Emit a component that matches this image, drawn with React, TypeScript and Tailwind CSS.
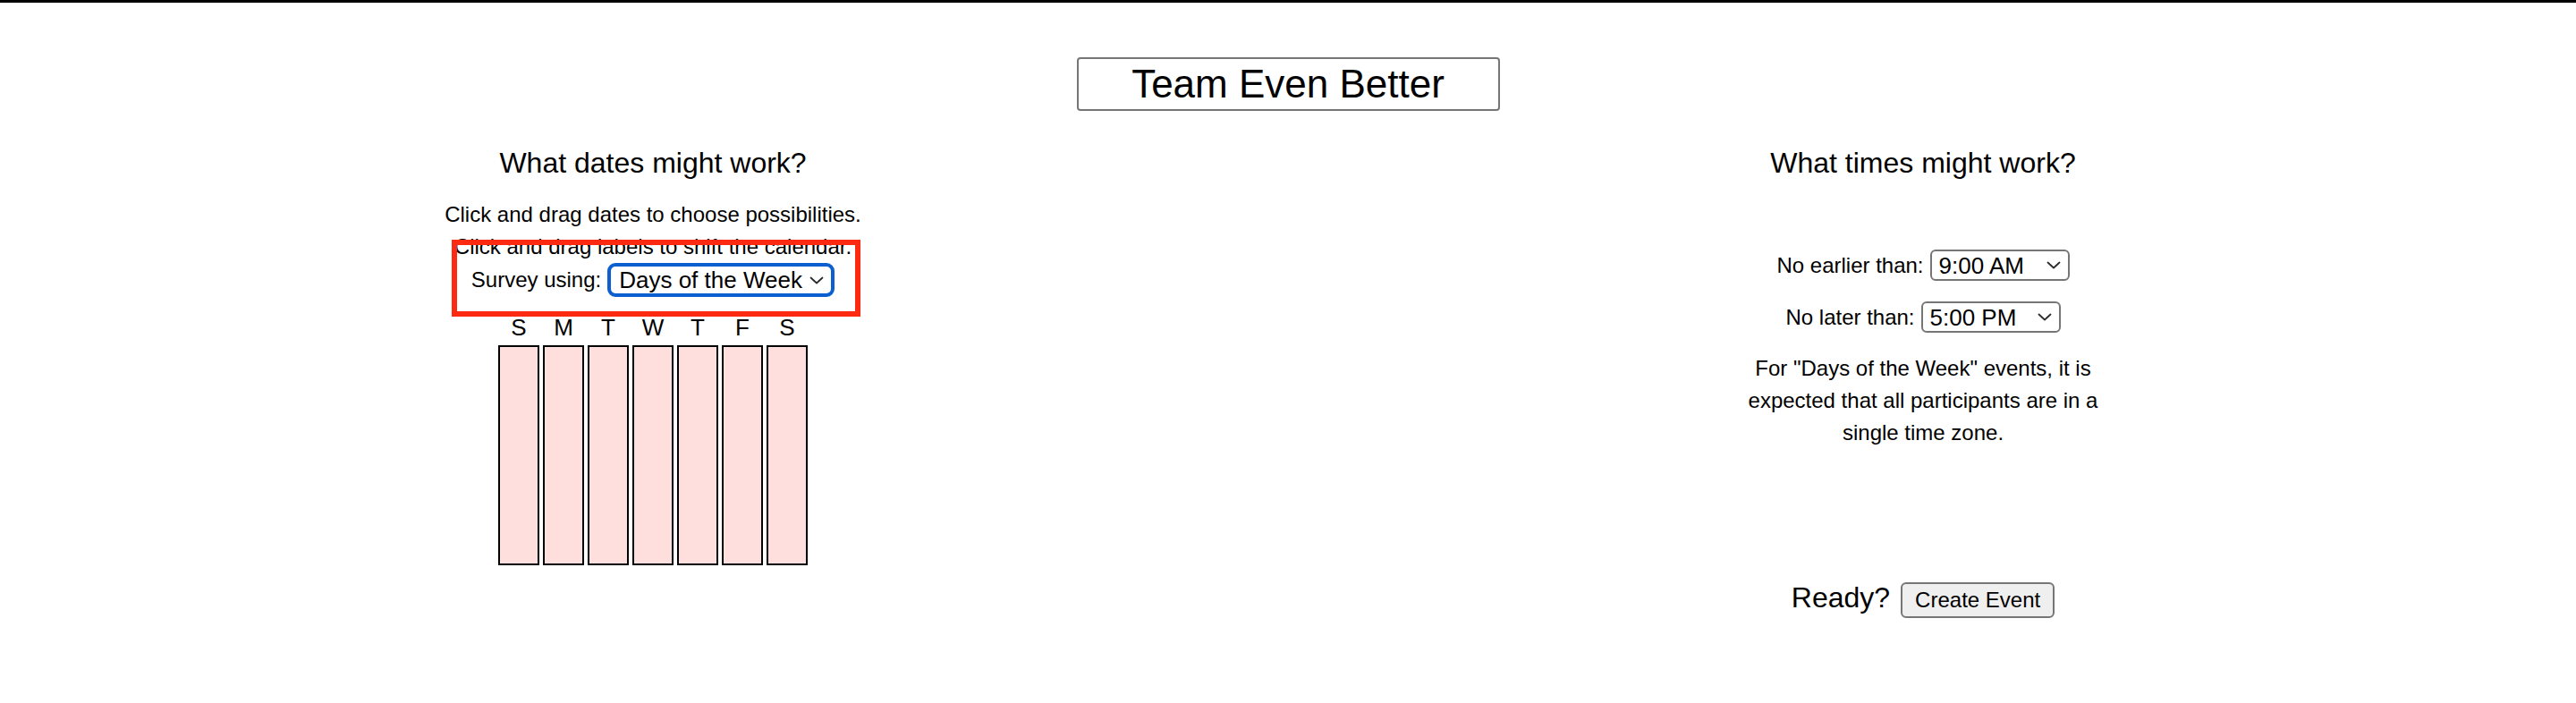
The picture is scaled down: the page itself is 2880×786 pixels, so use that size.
import { useState } from "react";

const days = ["S", "M", "T", "W", "T", "F", "S"];

function Chevron() {
	return (
		<svg width="16" height="9" viewBox="0 0 16 9" className="shrink-0">
			<path d="M1.5 1.5 L8 7.5 L14.5 1.5" fill="none" stroke="#2b2b2b" strokeWidth="1.8" strokeLinecap="round" strokeLinejoin="round" />
		</svg>
	);
}

// looks like a native mac select, but it's just a button
function FakeSelect({ value, className }: { value: string; className: string }) {
	return (
		<button
			type="button"
			className={
				"flex items-center justify-between bg-white text-left text-[26px] leading-none text-black outline-none " +
				className
			}
		>
			<span className="whitespace-nowrap">{value}</span>
			<Chevron />
		</button>
	);
}

export default function App() {
	const [title, setTitle] = useState("Team Even Better");

	return (
		<div className="relative min-h-[786px] bg-white font-['Liberation_Sans',Arial,sans-serif] text-black">
			<div className="h-[3px] w-full bg-black" />

			<div className="mt-[61px] flex justify-center">
				<input
					value={title}
					onChange={(e) => setTitle(e.target.value)}
					className="h-[60px] w-[473px] rounded-[4px] border-2 border-[#767676] text-center text-[44px] outline-none"
				/>
			</div>

			<div className="mt-[40px] grid grid-cols-2 px-[20px]">
				{/* dates */}
				<div className="flex flex-col items-center">
					<h3 className="text-[32px] leading-[37px]">What dates might work?</h3>
					<p className="mt-[21px] text-[24px] leading-[36px]">Click and drag dates to choose possibilities.</p>
					<p className="text-[24px] leading-[36px]">Click and drag labels to shift the calendar.</p>
					<div className="flex h-[38px] items-center gap-[7px]">
						<span className="text-[24px] leading-[36px]">Survey using:</span>
						<FakeSelect
							value="Days of the Week"
							className="h-[38px] w-[254px] rounded-[9px] border-[4px] border-[#0b5fd0] pl-[9px] pr-[8px]"
						/>
					</div>
					<div className="mt-[16px] grid grid-cols-[repeat(7,46px)] gap-x-[4px]">
						{days.map((d, i) => (
							<div key={i} className="h-[36px] text-center text-[26px] leading-[36px]">
								{d}
							</div>
						))}
					</div>
					<div className="mt-[2px] grid grid-cols-[repeat(7,46px)] gap-x-[4px]">
						{days.map((d, i) => (
							<div key={i} className="h-[246px] border-2 border-black bg-[#fedfdd]" />
						))}
					</div>
				</div>

				{/* times */}
				<div className="flex flex-col items-center">
					<h3 className="text-[32px] leading-[37px]">What times might work?</h3>
					<div className="mt-[78px] flex h-[35px] items-center gap-[7px]">
						<span className="text-[24px]">No earlier than:</span>
						<FakeSelect
							value="9:00 AM"
							className="h-[35px] w-[156px] rounded-[6px] border-2 border-[#767676] pl-[8px] pr-[8px]"
						/>
					</div>
					<div className="mt-[23px] flex h-[35px] items-center gap-[7px]">
						<span className="text-[24px]">No later than:</span>
						<FakeSelect
							value="5:00 PM"
							className="h-[35px] w-[156px] rounded-[6px] border-2 border-[#767676] pl-[8px] pr-[8px]"
						/>
					</div>
					<p className="mt-[22px] w-[420px] text-center text-[24px] leading-[36px]">
						For "Days of the Week" events, it is expected that all participants are in a single time zone.
					</p>
					<div className="mt-[148px] flex items-baseline gap-[12px]">
						<span className="text-[32px] leading-[37px]">Ready?</span>
						<button className="rounded-[6px] border-2 border-[#767676] bg-[#efefef] px-[14px] py-[4px] text-[24px] leading-[28px]">
							Create Event
						</button>
					</div>
				</div>
			</div>

			{/* annotation box drawn over the screenshot */}
			<div className="pointer-events-none absolute left-[505px] top-[268px] h-[86px] w-[457px] border-[6px] border-[#fd2a12]" />
		</div>
	);
}
